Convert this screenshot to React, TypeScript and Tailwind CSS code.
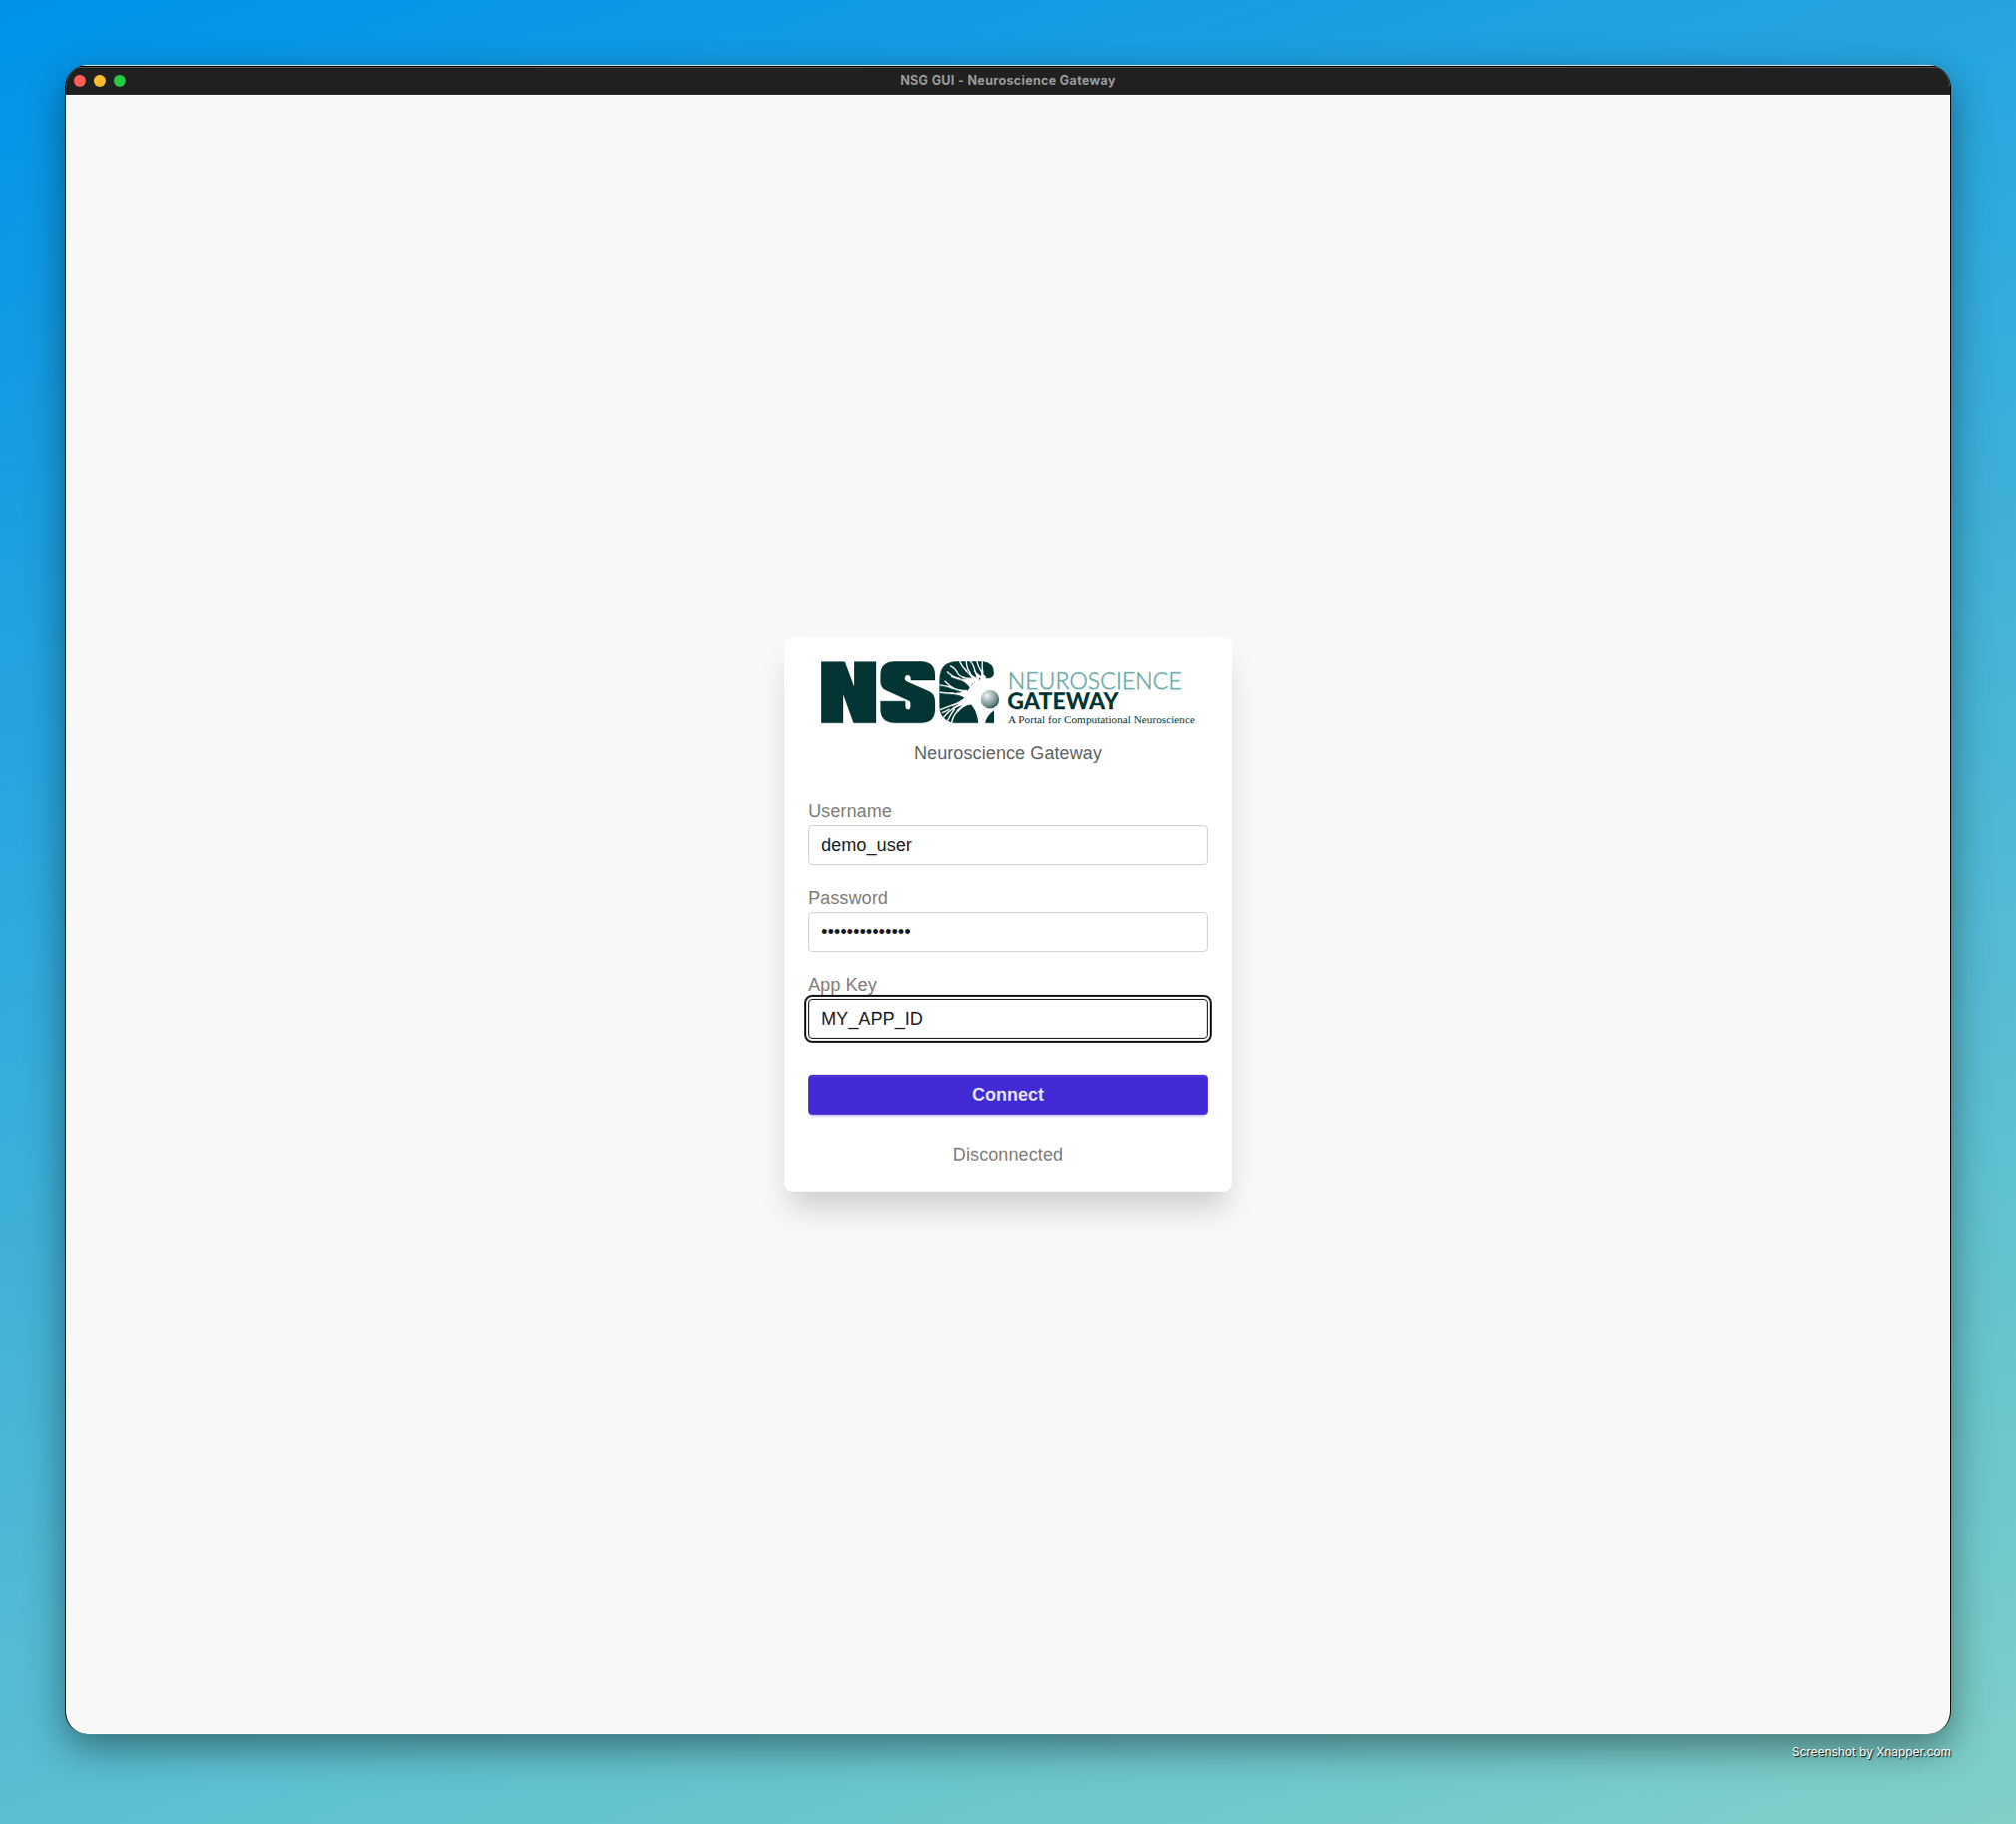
import React from "react";

const DARK = "#033535";

function Logo() {
  return (
    <svg viewBox="-3 36 1200 192" className="block h-16 w-[400px]" role="img" aria-label="NSG">
      <defs>
        <radialGradient id="ball" cx="0.34" cy="0.3" r="0.75">
          <stop offset="0" stopColor="#f1f4f4" />
          <stop offset="0.35" stopColor="#b4c4c4" />
          <stop offset="0.75" stopColor="#6a8b8b" />
          <stop offset="1" stopColor="#2c5656" />
        </radialGradient>
        <clipPath id="g-shape">
          <path d="M446 36H520Q555 40 555 72V86H510V221H437Q391 214 391 168V92Q391 36 446 36Z" />
        </clipPath>
      </defs>
      <path fill={DARK} d="M36 37H107L135 112V37H201V221H133L102 135V221H36Z" />
      <path
        fill={DARK}
        d="M378 93H305V88Q304 77 296 77Q287 77 287 88Q287 94 294 97L362 127Q378 135 378 158V180Q378 221 336 221H258Q214 221 214 180V155H289V172Q290 181 297 181Q304 181 304 172V162Q304 156 298 154L232 124Q214 116 214 96V77Q214 36 258 36H335Q378 36 378 78Z"
      />
      {/* Dendritic G */}
      <path
        fill={DARK}
        d="M446 36H522Q555 40 555 72Q553 86 538 87Q529 88 524 80Q516 84 508 96Q494 96 488 110Q474 120 472 136Q468 146 478 158Q503 176 508 221H437Q391 214 391 168V92Q391 36 446 36Z"
      />
      <path fill={DARK} d="M555 184V221H528Q534 198 555 184Z" />
      <g clipPath="url(#g-shape)">
        <g stroke="#fff" strokeLinecap="round" fill="none">
          <path
            strokeWidth="4"
            d="M391 129Q410 132 432 132M391 107Q412 110 430 116M408 96Q420 110 436 118M415 68Q432 84 452 88M428 82Q440 88 452 88M424 50Q438 56 446 72Q452 82 468 86M452 36Q458 52 474 66M472 36Q472 56 484 72M484 36Q494 46 498 66M504 36Q508 56 518 66M520 36Q518 54 522 70M392 182Q416 172 434 166M404 204Q416 188 440 172M400 190Q412 186 420 180M428 218Q432 200 446 184M416 214Q424 196 436 180"
          />
        </g>
        <g fill="#fff">
          <path d="M424 130Q452 134 474 122L480 152Q452 134 424 134Z" />
          <path d="M424 112Q452 124 474 122L476 136Q450 124 424 117Z" />
          <path d="M444 86Q474 92 496 90L484 118Q470 94 444 90Z" />
          <path d="M460 82Q478 88 498 84L494 104Q482 90 462 88Z" />
          <path d="M470 62Q486 80 500 84L502 106Q486 80 468 64Z" />
          <path d="M481 68Q494 84 506 86L502 106Q490 82 479 70Z" />
          <path d="M496 60Q504 76 520 82L506 104Q502 78 494 62Z" />
          <path d="M516 62Q522 74 532 84L514 94Q520 74 513 64Z" />
          <path d="M428 166Q452 158 472 140L484 162Q452 162 430 170Z" />
          <path d="M432 174Q456 162 474 152L484 162Q456 166 434 180Z" />
          <path d="M442 184Q458 170 474 154L488 166Q466 166 446 190Z" />
        </g>
      </g>
      <circle cx="543" cy="150" r="27.5" fill="url(#ball)" />
      <text x="596" y="119" fontFamily="Lato, sans-serif" fontWeight="300" fontSize="70" fill="#5fa6a6" stroke="#5fa6a6" strokeWidth="1.2" textLength="523" lengthAdjust="spacingAndGlyphs">NEUROSCIENCE</text>
      <text x="595" y="179" fontFamily="Lato, sans-serif" fontWeight="900" fontSize="68" fill={DARK} textLength="334" lengthAdjust="spacingAndGlyphs">GATEWAY</text>
      <text x="597" y="222" fontFamily="Liberation Serif, serif" fontSize="34" fill={DARK} textLength="561" lengthAdjust="spacingAndGlyphs">A Portal for Computational Neuroscience</text>
    </svg>
  );
}

function Field({ label, value, type = "text", focused = false }: { label: string; value: string; type?: string; focused?: boolean }) {
  return (
    <label className="mb-[21px] block h-[66px]">
      <span className="block h-[26px] text-lg leading-6 tracking-[0.1px] text-[#7b7b7b]">{label}</span>
      <input
        type={type}
        defaultValue={value}
        className={
          focused
            ? "block h-10 w-full rounded-sm border border-[#18181b] bg-white px-3 text-lg tracking-[0.1px] text-[#18181b] outline-2 outline-offset-2 outline-[#18181b]"
            : "block h-10 w-full rounded-sm border border-[#d1d1d1] bg-white px-3 text-lg tracking-[0.1px] text-[#18181b] outline-none"
        }
      />
    </label>
  );
}

export default function App() {
  return (
    <div className="flex h-[1826px] w-[2018px] flex-col bg-[linear-gradient(160deg,#0093E9_0%,#80D0C7_100%)] px-[65px] pt-[65px] font-['Liberation_Sans',Arial,sans-serif]">
      <div className="flex h-[1671px] flex-col overflow-hidden rounded-[23px] border-x border-black bg-[#f8f8f8] shadow-[0_14px_38px_rgba(0,0,0,0.42)]">
        <div className="h-px shrink-0 bg-[#d5e6ee]" />
        <header className="flex h-[29px] shrink-0 items-center border-t border-black bg-[#202020] px-2 shadow-[inset_0_1px_0_#555]">
          <div className="flex w-[60px] gap-2">
            <span className="size-3 rounded-full bg-[#ff5f57]" />
            <span className="size-3 rounded-full bg-[#febc2e]" />
            <span className="size-3 rounded-full bg-[#28c840]" />
          </div>
          <h1 className="flex-1 text-center font-['Inter',sans-serif] text-[12.5px] font-bold tracking-[0.34px] text-[#9c9c9c]">NSG GUI - Neuroscience Gateway</h1>
          <div className="w-[60px]" />
        </header>
        <main className="flex flex-1 items-center justify-center">
          <section className="h-[555px] w-[448px] rounded-lg bg-white p-6 shadow-[0_22px_30px_-6px_rgba(0,0,0,0.17)]">
            <Logo />
            <p className="mt-4 text-center text-lg leading-6 tracking-[0.1px] text-[#5f5f5f]">Neuroscience Gateway</p>
            <form className="mt-[34px]">
              <Field label="Username" value="demo_user" />
              <Field label="Password" value="passwordpasswo" type="password" />
              <Field label="App Key" value="MY_APP_ID" focused />
              <button type="button" className="mt-9 block h-10 w-full rounded-sm bg-[#422ad5] text-lg font-bold text-[#e0e7ff] shadow-[inset_0_3px_0_-1px_rgba(255,255,255,0.08),0_3px_3px_-2px_rgba(66,42,213,0.5)]">
                Connect
              </button>
            </form>
            <p className="mt-7 text-center text-lg leading-6 tracking-[0.1px] text-[#7b7b7b]">Disconnected</p>
          </section>
        </main>
      </div>
      <p className="mt-2.5 text-right font-['Inter',sans-serif] text-[11.9px] leading-4 text-white [text-shadow:1px_1px_1px_#000]">Screenshot by Xnapper.com</p>
    </div>
  );
}
